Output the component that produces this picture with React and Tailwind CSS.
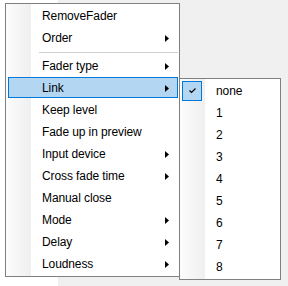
import React from "react";

const Arrow = () => (
  <svg width="4" height="7" viewBox="0 0 4 7" className="block">
    <polygon points="0,0 4,3.5 0,7" fill="#000" />
  </svg>
);

const mainItems = [
  { label: "RemoveFader" },
  { label: "Order", sub: true },
  { sep: true },
  { label: "Fader type", sub: true },
  { label: "Link", sub: true, active: true },
  { label: "Keep level" },
  { label: "Fade up in preview" },
  { label: "Input device", sub: true },
  { label: "Cross fade time", sub: true },
  { label: "Manual close" },
  { label: "Mode", sub: true },
  { label: "Delay", sub: true },
  { label: "Loudness", sub: true },
];

const subItems = ["none", "1", "2", "3", "4", "5", "6", "7", "8"];

export default function App() {
  return (
    <div
      className="w-[288px] h-[286px] overflow-hidden bg-[linear-gradient(to_right,#ffffff_58px,#f0f0f0_58px)] pl-[5px] pt-[3px] flex items-start tracking-[-0.1px]"
      style={{ fontFamily: '"Liberation Sans", Arial, sans-serif' }}
    >
      {/* main menu */}
      <div className="relative w-[175px] border border-[#808080] bg-white py-[1px] text-[12px] text-black">
        <div className="absolute left-0 top-0 bottom-0 w-[25px] bg-[linear-gradient(to_right,#fcfcfc,#efefef)]" />
        <div className="relative flex flex-col">
          {mainItems.map((it, i) =>
            it.sep ? (
              <div key={i} className="h-[6px] flex items-center pl-[33px] pr-[1px]">
                <div className="h-px w-full bg-[#d0d0d0]" />
              </div>
            ) : (
              <div key={i} className="h-[22px] relative">
                {it.active && (
                  <div className="absolute left-[2px] right-[1px] top-0 h-[21px] bg-[#b3d7f3] border border-[#0078d7]" />
                )}
                <div className="relative h-[22px] flex items-center pl-[36px] pr-[10px] leading-[22px]">
                  <span className="flex-1 whitespace-nowrap">{it.label}</span>
                  {it.sub && <Arrow />}
                </div>
              </div>
            )
          )}
        </div>
      </div>

      {/* sub menu */}
      <div className="relative ml-[-1px] mt-[75px] w-[102px] border border-[#808080] bg-white py-[1px] text-[12px] text-black">
        <div className="absolute left-0 top-0 bottom-0 w-[25px] bg-[linear-gradient(to_right,#fcfcfc,#efefef)]" />
        <div className="relative flex flex-col">
          {subItems.map((s, i) => (
            <div key={i} className="h-[22px] relative flex items-center">
              {i === 0 && (
                <div className="absolute left-[2px] top-[1px] w-[20px] h-[20px] bg-[#b3d7f3] border border-[#0078d7] flex items-center justify-center">
                  <svg width="7" height="6" viewBox="0 0 7 6" className="block">
                    <polyline points="0.5,2.5 2.5,4.5 6.5,0.5" fill="none" stroke="#000" strokeWidth="1.2" />
                  </svg>
                </div>
              )}
              <span className="relative pl-[36px] leading-[22px] whitespace-nowrap">{s}</span>
            </div>
          ))}
        </div>
      </div>
    </div>
  );
}
